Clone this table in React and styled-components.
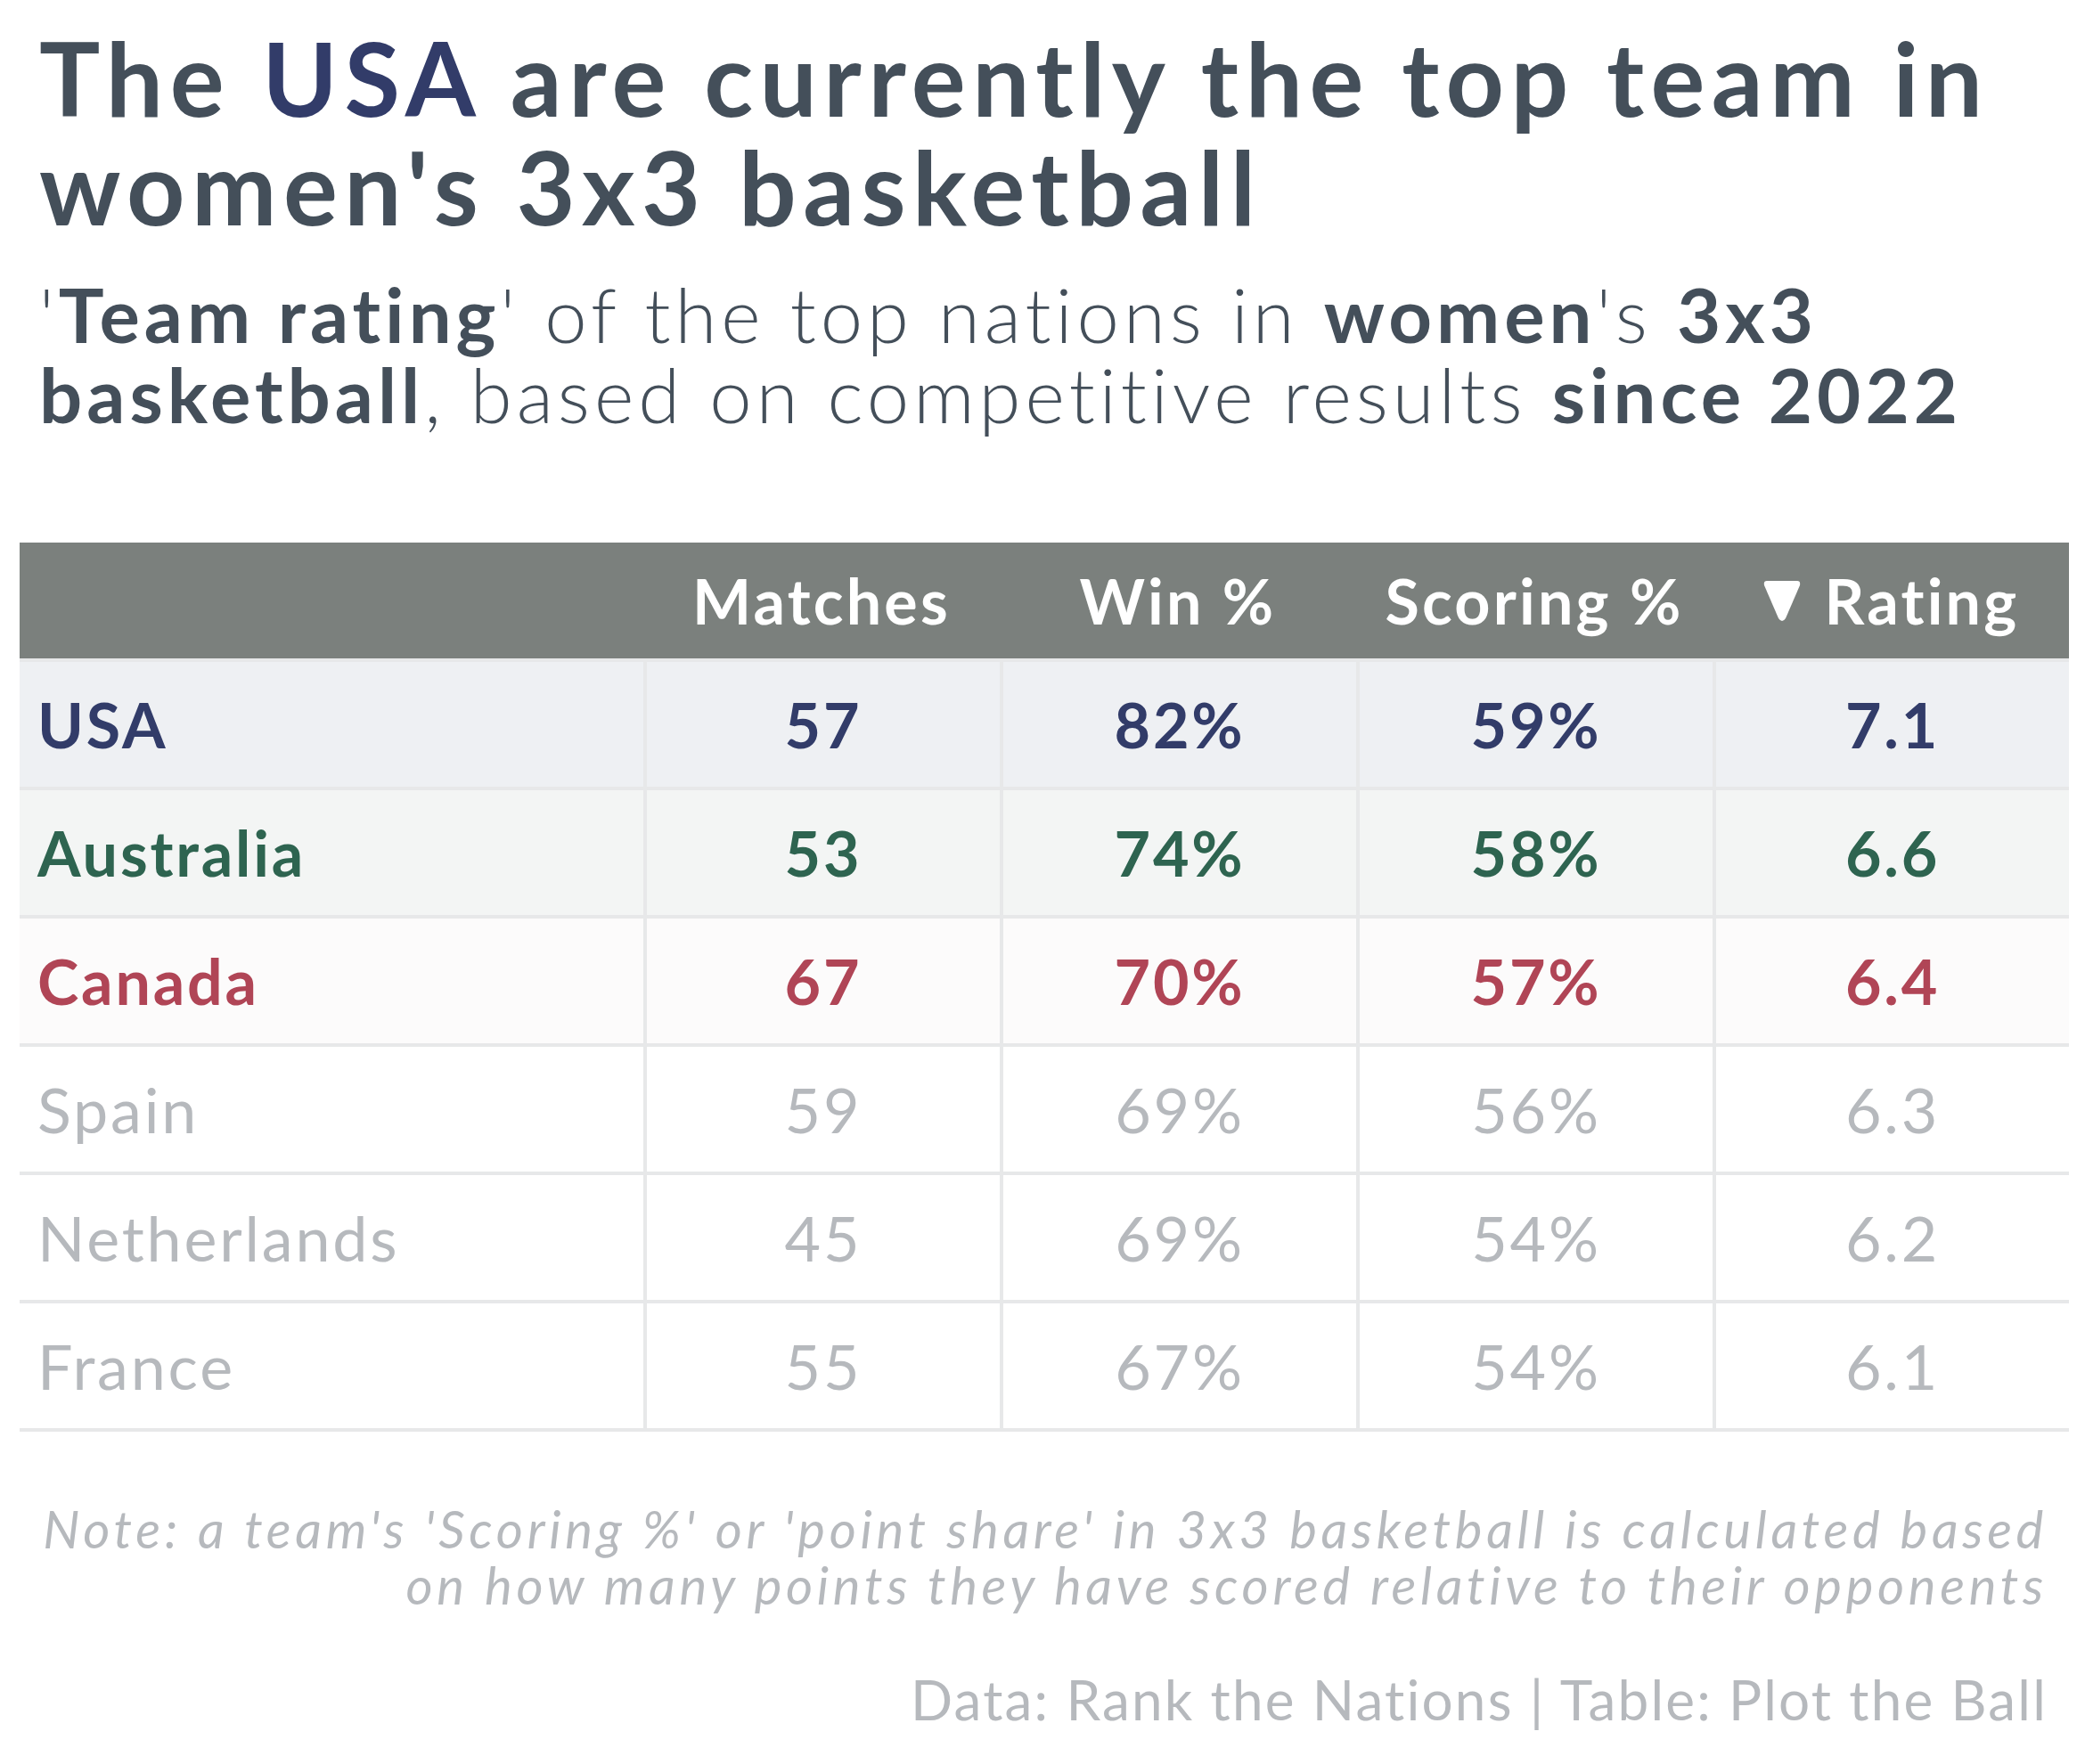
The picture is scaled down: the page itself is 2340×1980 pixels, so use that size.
import React from 'react';
import styled, { createGlobalStyle } from 'styled-components';

const GlobalStyle = createGlobalStyle`
  html, body {
    margin: 0;
    padding: 0;
    background: #ffffff;
  }
  body {
    font-family: Lato, "Noto Sans", sans-serif;
  }
`;

const teams = [
  { name: 'USA', matches: 57, win: '82%', scoring: '59%', rating: '7.1', tone: 'usa' },
  { name: 'Australia', matches: 53, win: '74%', scoring: '58%', rating: '6.6', tone: 'aus' },
  { name: 'Canada', matches: 67, win: '70%', scoring: '57%', rating: '6.4', tone: 'can' },
  { name: 'Spain', matches: 59, win: '69%', scoring: '56%', rating: '6.3' },
  { name: 'Netherlands', matches: 45, win: '69%', scoring: '54%', rating: '6.2' },
  { name: 'France', matches: 55, win: '67%', scoring: '54%', rating: '6.1' },
];

// row text + background per highlighted team
const tones = {
  usa: { color: '#323c69', bg: '#eef0f3' },
  aus: { color: '#2e6450', bg: '#f3f5f4' },
  can: { color: '#b04556', bg: '#fcfbfb' },
};

const SortArrow = () => (
  <svg width="44" height="50" viewBox="0 0 44 50">
    <path d="M5 3 H39 Q43 3 42 8 L26 45 Q22 51 18 45 L2 8 Q1 3 5 3 Z" fill="#ffffff" />
  </svg>
);

const App = () => {
  return (
    <>
      <GlobalStyle />
      <Page>
        <Title>
          The <Usa>USA</Usa> are currently the top team in
          <br />
          women's 3x3 basketball
        </Title>
        <Subtitle>
          '<b>Team rating</b>' of the top nations in <b>women</b>'s <b>3x3</b>
          <br />
          <b>basketball</b>, based on competitive results <b>since 2022</b>
        </Subtitle>

        <Table>
          <HeaderRow>
            <HeadCell />
            <HeadCell>Matches</HeadCell>
            <HeadCell>Win %</HeadCell>
            <HeadCell>Scoring %</HeadCell>
            <HeadCell>
              <SortArrow />
              Rating
            </HeadCell>
          </HeaderRow>
          <Body>
            {teams.map((t) => (
              <Row key={t.name} $tone={t.tone}>
                <NameCell>{t.name}</NameCell>
                <Cell>{t.matches}</Cell>
                <Cell>{t.win}</Cell>
                <Cell>{t.scoring}</Cell>
                <Cell>{t.rating}</Cell>
              </Row>
            ))}
          </Body>
        </Table>

        <Note>
          Note: a team's 'Scoring %' or 'point share' in 3x3 basketball is calculated based
          <br />
          on how many points they have scored relative to their opponents
        </Note>
        <Source>Data: Rank the Nations | Table: Plot the Ball</Source>
      </Page>
    </>
  );
};

const Page = styled.main`
  width: 2340px;
  height: 1980px;
  box-sizing: border-box;
  padding: 26px 18px 0 22px;
  display: flex;
  flex-direction: column;
  color: #444f5a;
`;

const Title = styled.h1`
  margin: 0 0 0 22px;
  font-size: 114px;
  line-height: 122px;
  font-weight: 700;
  letter-spacing: 7.5px;
`;

const Usa = styled.span`
  color: #323c69;
`;

const Subtitle = styled.p`
  margin: 37px 0 0 22px;
  font-size: 85px;
  line-height: 90px;
  font-weight: 300;
  letter-spacing: 5px;

  b {
    font-weight: 700;
  }
`;

const Table = styled.section`
  margin-top: 122px;
  width: 2300px;
`;

const columns = '700px 400px 400px 400px 400px';

const HeaderRow = styled.div`
  display: grid;
  grid-template-columns: ${columns};
  height: 130px;
  background: #7b807d;
`;

const HeadCell = styled.div`
  display: flex;
  align-items: center;
  justify-content: center;
  gap: 26px;
  color: #ffffff;
  font-size: 70px;
  font-weight: 700;
  letter-spacing: 3.2px;
`;

const Body = styled.div`
  border-top: 4px solid #e7e8e9;
`;

const Row = styled.div`
  display: grid;
  grid-template-columns: ${columns};
  height: 144px;
  box-sizing: border-box;
  border-bottom: 4px solid #e7e8e9;
  background: ${(p) => (p.$tone ? tones[p.$tone].bg : '#ffffff')};
  color: ${(p) => (p.$tone ? tones[p.$tone].color : '#b6b9bd')};
  font-weight: ${(p) => (p.$tone ? 700 : 400)};
  font-size: 70px;
  letter-spacing: 2.8px;
`;

const Cell = styled.div`
  display: flex;
  align-items: center;
  justify-content: center;
  border-left: 4px solid #e7e8e9;
`;

const NameCell = styled.div`
  display: flex;
  align-items: center;
  padding-left: 20px;
`;

const Note = styled.p`
  margin: 77px 24px 0 0;
  text-align: right;
  font-size: 58px;
  line-height: 63px;
  font-style: italic;
  letter-spacing: 4.7px;
  color: #b6b9bd;
`;

const Source = styled.p`
  margin: 62px 24px 0 0;
  text-align: right;
  font-size: 62px;
  line-height: 70px;
  letter-spacing: 2.2px;
  color: #b6b9bd;
`;

export default App;
